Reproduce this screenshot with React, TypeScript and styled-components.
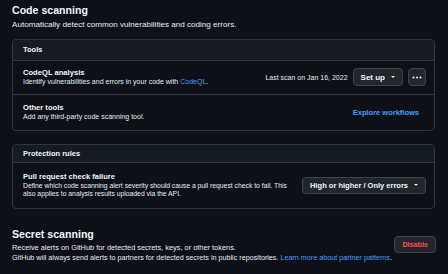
import styled, { createGlobalStyle } from 'styled-components'

const GlobalStyle = createGlobalStyle`
  html, body {
    margin: 0;
    padding: 0;
    background: #0d1117;
  }
  body {
    font-family: "Liberation Sans", Arial, sans-serif;
    color: #e6edf3;
    -webkit-font-smoothing: antialiased;
  }
`

const Page = styled.div`
  width: 448px;
  height: 274px;
  box-sizing: border-box;
  padding: 3px 12px 0 12px;
  overflow: hidden;
`

const Heading = styled.h2`
  margin: 0;
  font-size: 10.6px;
  line-height: 14px;
  font-weight: 700;
  color: #f0f6fc;
`

const Lead = styled.p<{ size?: number; top?: number }>`
  margin: ${({ top }) => top ?? 0}px 0 0;
  font-size: ${({ size }) => size ?? 8.1}px;
  line-height: 10.5px;
  color: #e6edf3;
`

const Note = styled.p`
  margin: 0;
  font-size: 7.2px;
  line-height: 10px;
  color: #e6edf3;
  white-space: nowrap;
`

const Box = styled.section<{ top: number }>`
  margin: ${({ top }) => top}px 1px 0 0;
  border: 1px solid #30363d;
  border-radius: 4px;
  overflow: hidden;
`

const BoxHeader = styled.div<{ h: number }>`
  height: ${({ h }) => h}px;
  display: flex;
  align-items: center;
  padding: 0 10px;
  background: #161b22;
  border-bottom: 1px solid #30363d;
  font-size: 7.5px;
  font-weight: 700;
  color: #f0f6fc;
`

const Row = styled.div<{ h: number }>`
  height: ${({ h }) => h}px;
  display: flex;
  align-items: center;
  gap: 5px;
  padding: 0 8px 0 10px;
  & + & {
    border-top: 1px solid #30363d;
  }
`

const RowText = styled.div`
  flex: 1;
  min-width: 0;
`

const RowTitle = styled.div`
  font-size: 7.6px;
  line-height: 10px;
  font-weight: 700;
  color: #f0f6fc;
`

const RowDesc = styled.div<{ size?: number }>`
  font-size: ${({ size }) => size ?? 7}px;
  line-height: 7.6px;
  color: #e6edf3;
`

const Link = styled.a`
  color: #4c9cf8;
  text-decoration: none;
`

const Meta = styled.span`
  font-size: 7px;
  color: #e6edf3;
`

const Button = styled.button<{ $danger?: boolean; $square?: boolean; $h?: number; $size?: number }>`
  display: inline-flex;
  align-items: center;
  justify-content: center;
  flex-shrink: 0;
  gap: 6px;
  height: ${({ $h }) => $h ?? 18}px;
  padding: ${({ $square }) => ($square ? '0' : '0 7px')};
  width: ${({ $square }) => ($square ? '18px' : 'auto')};
  border: 1px solid #3d444d;
  border-radius: 4px;
  background: #21262d;
  color: ${({ $danger }) => ($danger ? '#f85149' : '#f0f6fc')};
  font-family: inherit;
  font-size: ${({ $size }) => $size ?? 8}px;
  font-weight: 700;
  white-space: nowrap;
`

const Caret = styled.span`
  width: 0;
  height: 0;
  border-left: 2.5px solid transparent;
  border-right: 2.5px solid transparent;
  border-top: 2.5px solid #f0f6fc;
`

const TextLink = styled.a`
  color: #4c9cf8;
  font-size: 7.5px;
  font-weight: 700;
  margin-right: 7px;
`

const SecretSection = styled.div`
  margin-top: 18px;
  display: flex;
  align-items: flex-end;
  justify-content: space-between;
`

const Dots = () => (
  <svg width="10" height="3" viewBox="0 0 10 3">
    <circle cx="1.5" cy="1.5" r="1" fill="#f0f6fc" />
    <circle cx="5" cy="1.5" r="1" fill="#f0f6fc" />
    <circle cx="8.5" cy="1.5" r="1" fill="#f0f6fc" />
  </svg>
)

export default function App() {
  return (
    <Page>
      <GlobalStyle />
      <Heading>Code scanning</Heading>
      <Lead top={3}>Automatically detect common vulnerabilities and coding errors.</Lead>

      <Box top={8}>
        <BoxHeader h={20}>Tools</BoxHeader>
        <Row h={33}>
          <RowText>
            <RowTitle>CodeQL analysis</RowTitle>
            <RowDesc>
              Identify vulnerabilities and errors in your code with <Link>CodeQL</Link>.
            </RowDesc>
          </RowText>
          <Meta>Last scan on Jan 16, 2022</Meta>
          <Button>
            Set up <Caret />
          </Button>
          <Button $square>
            <Dots />
          </Button>
        </Row>
        <Row h={35}>
          <RowText>
            <RowTitle>Other tools</RowTitle>
            <RowDesc>Add any third-party code scanning tool.</RowDesc>
          </RowText>
          <TextLink>Explore workflows</TextLink>
        </Row>
      </Box>

      <Box top={13}>
        <BoxHeader h={17}>Protection rules</BoxHeader>
        <Row h={45}>
          <RowText>
            <RowTitle>Pull request check failure</RowTitle>
            <RowDesc size={6.8}>
              Define which code scanning alert severity should cause a pull request check to fail. This
              also applies to analysis results uploaded via the API.
            </RowDesc>
          </RowText>
          <Button $h={17} $size={7.5}>
            High or higher / Only errors <Caret />
          </Button>
        </Row>
      </Box>

      <SecretSection>
        <div>
          <Heading>Secret scanning</Heading>
          <Lead size={7.4} top={2}>
            Receive alerts on GitHub for detected secrets, keys, or other tokens.
          </Lead>
        </div>
        <Button $danger $h={17} $size={7.2}>
          Disable
        </Button>
      </SecretSection>
      <Note>
        GitHub will always send alerts to partners for detected secrets in public repositories.{' '}
        <Link>Learn more about partner patterns</Link>.
      </Note>
    </Page>
  )
}
